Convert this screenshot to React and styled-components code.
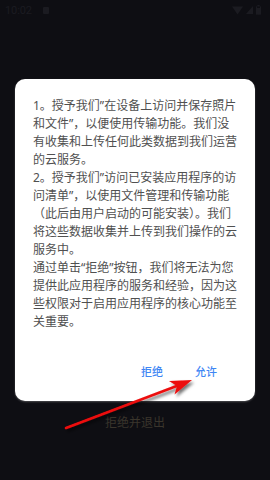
import React from "react";
import styled, { createGlobalStyle } from "styled-components";

const Global = createGlobalStyle`
  html, body { margin: 0; padding: 0; background: #0e0e13; }
  body { font-family: "Noto Sans", "Noto Sans CJK SC", sans-serif; }
  * { box-sizing: border-box; }
`;

const Page = styled.div`
  position: relative;
  width: 270px;
  height: 480px;
  overflow: hidden;
  background: #0e0e13;
  display: flex;
  flex-direction: column;
`;

const StatusBar = styled.div`
  height: 20px;
  padding: 0 9px 0 5px;
  display: flex;
  align-items: center;
  color: #1b1b21;
  font-family: Roboto, "Noto Sans", sans-serif;
  font-size: 11px;
`;

const Time = styled.span`
  letter-spacing: -0.1px;
`;

const NotifIcon = styled.span`
  margin-left: 11px;
  width: 6px;
  height: 7px;
  border-radius: 1px;
  background: #1b1b21;
`;

const StatusRight = styled.div`
  margin-left: auto;
  display: flex;
  align-items: center;
  gap: 3px;
`;

const Body = styled.div`
  flex: 1;
`;

const Footer = styled.div`
  padding-bottom: 48px;
  text-align: center;
  font-family: "Noto Sans CJK SC", sans-serif;
  font-size: 12px;
  line-height: 20px;
  color: #3a352c;
`;

const Overlay = styled.div`
  position: absolute;
  inset: 0;
  display: flex;
  align-items: center;
  justify-content: center;
`;

const Dialog = styled.div`
  width: 240px;
  background: #ffffff;
  border-radius: 10px;
  box-shadow: 0 1px 2px rgba(255, 255, 255, 0.25);
  display: flex;
  flex-direction: column;
`;

const Message = styled.div`
  padding: 18px 12px 0 18px;
  font-family: "Noto Sans", "Noto Sans CJK SC", sans-serif;
  font-size: 12px;
  line-height: 18px;
  white-space: nowrap;
  color: #505050;
`;

const Actions = styled.div`
  margin-top: 22px;
  padding: 0 22px 12px 0;
  display: flex;
  justify-content: flex-end;
`;

const ActionButton = styled.button`
  height: 36px;
  padding: 0 16px;
  border: none;
  background: transparent;
  font-family: "Noto Sans CJK SC", sans-serif;
  font-size: 11px;
  font-weight: 500;
  color: #3e86f4;
`;

const ArrowLayer = styled.svg`
  position: absolute;
  left: 0;
  top: 0;
  pointer-events: none;
`;

export default function App() {
  return (
    <>
      <Global />
      <Page>
        <StatusBar>
          <Time>10:02</Time>
          <NotifIcon />
          <StatusRight>
            <svg width="11" height="9" viewBox="0 0 11 9">
              <path d="M0 0.5 L11 0.5 L5.5 8.5 Z" fill="#1b1b21" />
            </svg>
            <svg width="7" height="8" viewBox="0 0 7 8">
              <path d="M7 0 L7 8 L0 8 Z" fill="#1b1b21" />
            </svg>
            <svg width="5" height="10" viewBox="0 0 5 10">
              <rect x="0.5" y="1" width="4" height="9" rx="0.6" fill="none" stroke="#1b1b21" />
              <rect x="1.5" y="0" width="2" height="1" fill="#1b1b21" />
              <rect x="1" y="3" width="3" height="6.5" fill="#1b1b21" />
            </svg>
          </StatusRight>
        </StatusBar>
        <Body />
        <Footer>拒绝并退出</Footer>

        <Overlay>
          <Dialog>
            <Message>
              1。授予我们”在设备上访问并保存照片<br />
              和文件”，以便使用传输功能。我们没<br />
              有收集和上传任何此类数据到我们运营<br />
              的云服务。<br />
              2。授予我们”访问已安装应用程序的访<br />
              问清单”，以使用文件管理和传输功能<br />
              （此后由用户启动的可能安装）。我们<br />
              将这些数据收集并上传到我们操作的云<br />
              服务中。<br />
              通过单击“拒绝”按钮，我们将无法为您<br />
              提供此应用程序的服务和经验，因为这<br />
              些权限对于启用应用程序的核心功能至<br />
              关重要。
            </Message>
            <Actions>
              <ActionButton>拒绝</ActionButton>
              <ActionButton>允许</ActionButton>
            </Actions>
          </Dialog>
        </Overlay>

        <ArrowLayer width="270" height="480" viewBox="0 0 270 480">
          <defs>
            <filter id="sh" x="-20%" y="-50%" width="140%" height="200%">
              <feDropShadow dx="2" dy="2.5" stdDeviation="1.6" floodColor="#000" floodOpacity="0.55" />
            </filter>
          </defs>
          <g filter="url(#sh)">
            <line x1="66" y1="428" x2="178" y2="385.5" stroke="#ec0c0c" strokeWidth="2.6" strokeLinecap="round" />
            <path d="M192 380 L169 381 L177 386 L174.5 394.5 Z" fill="#ec0c0c" />
          </g>
        </ArrowLayer>
      </Page>
    </>
  );
}
